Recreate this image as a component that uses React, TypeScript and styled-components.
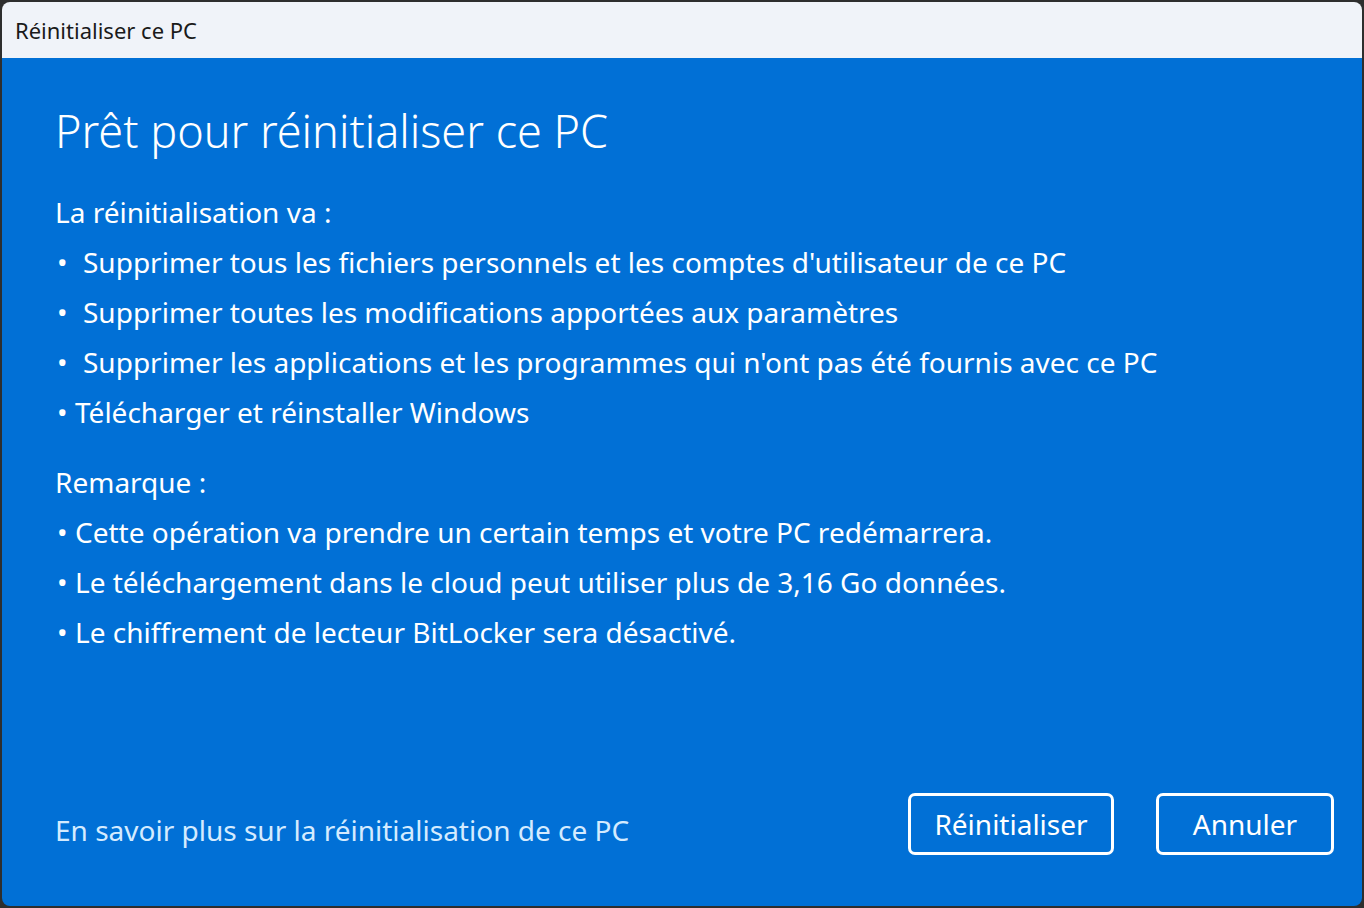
import styled, { createGlobalStyle } from 'styled-components';

const GlobalStyle = createGlobalStyle`
  html, body {
    margin: 0;
    padding: 0;
    background: #2e2e2e;
  }
  body {
    font-family: "Noto Sans", "Open Sans", sans-serif;
  }
`;

const firstList = [
  'Supprimer tous les fichiers personnels et les comptes d\'utilisateur de ce PC',
  'Supprimer toutes les modifications apportées aux paramètres',
  'Supprimer les applications et les programmes qui n\'ont pas été fournis avec ce PC',
];

const notes = [
  'Cette opération va prendre un certain temps et votre PC redémarrera.',
  'Le téléchargement dans le cloud peut utiliser plus de 3,16 Go données.',
  'Le chiffrement de lecteur BitLocker sera désactivé.',
];

const App = () => {
  return (
    <>
      <GlobalStyle />
      <Window>
        <TitleBar>Réinitialiser ce PC</TitleBar>
        <Content>
          <Heading>Prêt pour réinitialiser ce PC</Heading>
          <Section>
            <Line>La réinitialisation va :</Line>
            {firstList.map((item) => (
              <Line key={item}>
                <Bullet $wide>•</Bullet>
                {item}
              </Line>
            ))}
            <Line>
              <Bullet>•</Bullet>
              Télécharger et réinstaller Windows
            </Line>
          </Section>
          <Section>
            <Line>Remarque :</Line>
            {notes.map((item) => (
              <Line key={item}>
                <Bullet>•</Bullet>
                {item}
              </Line>
            ))}
          </Section>
          <Footer>
            <LearnMore href="#">En savoir plus sur la réinitialisation de ce PC</LearnMore>
            <Buttons>
              <Button $width={206}>Réinitialiser</Button>
              <Button $width={178}>Annuler</Button>
            </Buttons>
          </Footer>
        </Content>
      </Window>
    </>
  );
};

export default App;

const Window = styled.div`
  margin: 2px;
  width: 1360px;
  height: 904px;
  border-radius: 8px;
  overflow: hidden;
  display: flex;
  flex-direction: column;
`;

const TitleBar = styled.div`
  height: 56px;
  flex-shrink: 0;
  background: #f0f3f9;
  color: #1a1a1a;
  font-size: 22px;
  display: flex;
  align-items: center;
  padding-left: 13px;
  box-sizing: border-box;
`;

const Content = styled.div`
  flex: 1;
  background: #0170d6;
  color: #ffffff;
  padding: 44px 28px 51px 53px;
  display: flex;
  flex-direction: column;
`;

const Heading = styled.h1`
  margin: 0 0 27px;
  font-size: 45px;
  font-weight: 300;
  line-height: 58px;
`;

const Section = styled.div`
  display: flex;
  flex-direction: column;
  margin-bottom: 20px;
`;

const Line = styled.div`
  font-size: 28px;
  line-height: 50px;
  white-space: nowrap;
`;

const Bullet = styled.span<{ $wide?: boolean }>`
  display: inline-block;
  width: ${(p) => (p.$wide ? '28px' : '20px')};
  padding-left: 2px;
  box-sizing: border-box;
`;

const Footer = styled.div`
  margin-top: auto;
  display: flex;
  align-items: center;
  justify-content: space-between;
`;

const LearnMore = styled.a`
  color: #d4ebff;
  font-size: 28px;
  text-decoration: none;
  margin-top: 12px;
`;

const Buttons = styled.div`
  display: flex;
  gap: 42px;
`;

const Button = styled.button<{ $width: number }>`
  width: ${(p) => p.$width}px;
  height: 62px;
  background: transparent;
  border: 3px solid #ffffff;
  border-radius: 7px;
  color: #ffffff;
  font-family: "Noto Sans", "Open Sans", sans-serif;
  font-size: 28px;
  cursor: pointer;
`;
